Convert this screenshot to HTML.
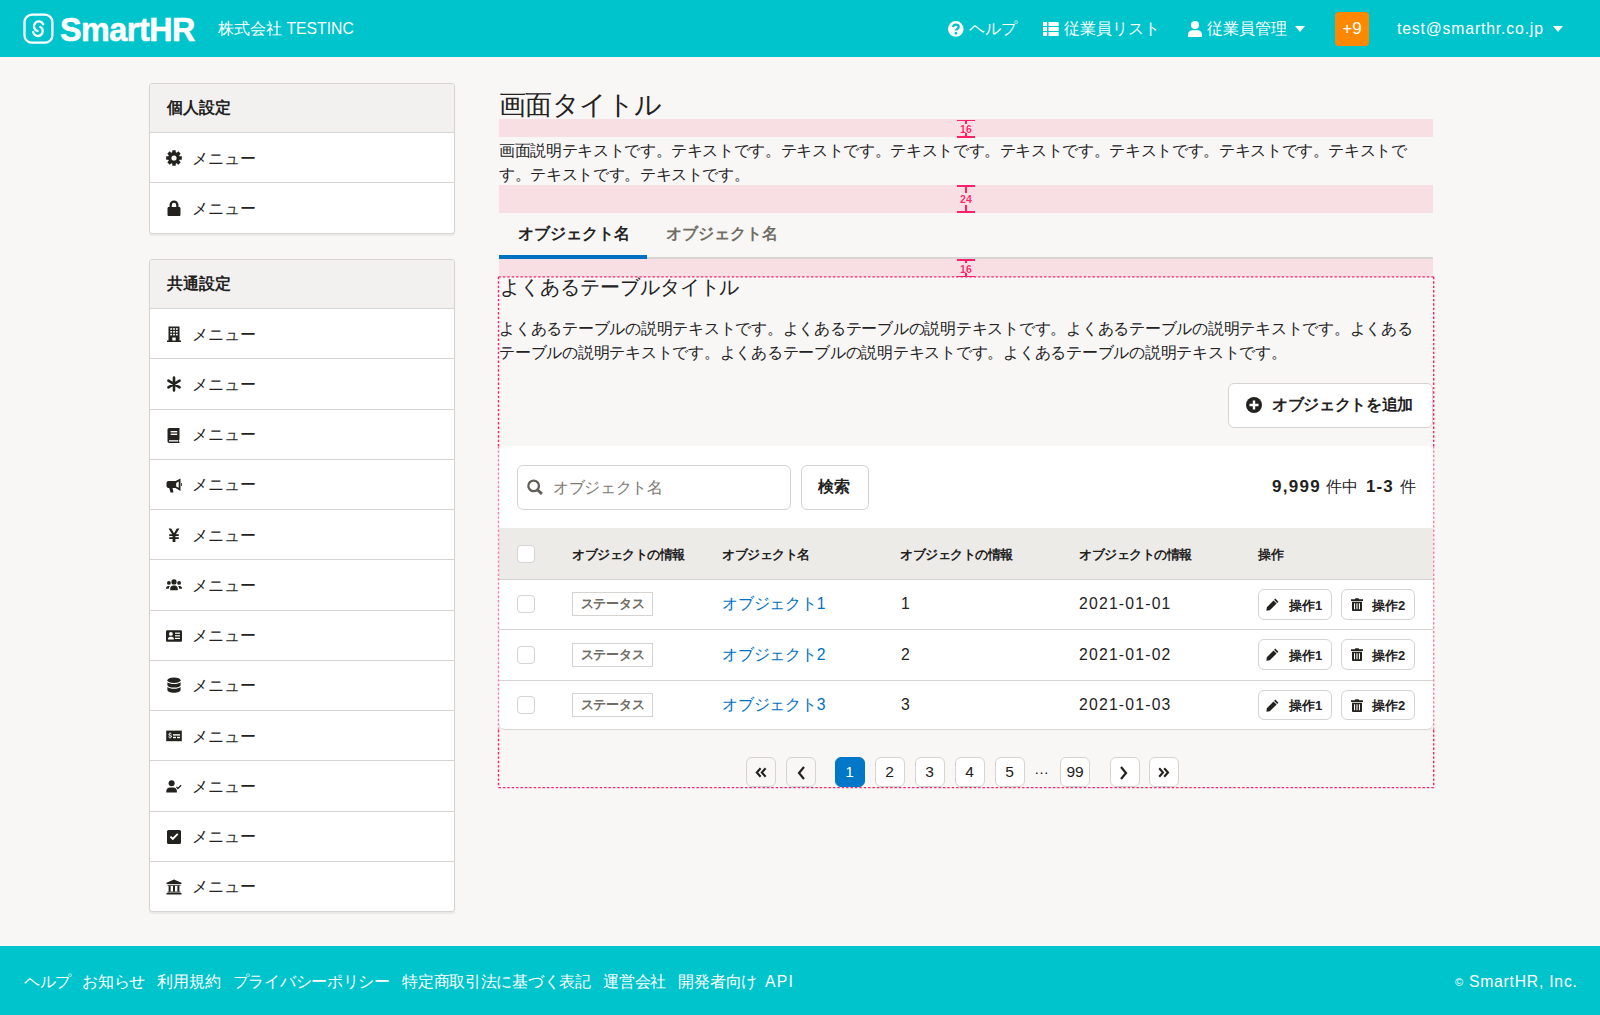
<!DOCTYPE html>
<html lang="ja">
<head>
<meta charset="utf-8">
<style>
*{box-sizing:border-box;margin:0;padding:0}
html,body{width:1600px;height:1015px;overflow:hidden}
body{font-family:"Liberation Sans",sans-serif;background:#f8f7f6;color:#23221e;position:relative;font-size:15.75px}
.abs{position:absolute}
.t{position:absolute;white-space:nowrap;line-height:1}
svg{display:block}
/* header */
#hdr{position:absolute;left:0;top:0;width:1600px;height:57px;background:#00c4cc;color:#fff}
#ftr{position:absolute;left:0;top:946px;width:1600px;height:69px;background:#00c4cc;color:#fff}
/* panels */
.panel{position:absolute;left:149px;width:306px;background:#fff;border:1px solid #d6d3d0;border-radius:3px;box-shadow:0 2px 1.5px rgba(0,0,0,.06);overflow:hidden}
.phead{height:49px;background:#f2f1f0;border-bottom:1px solid #d6d3d0;font-weight:bold;padding-left:16.7px;line-height:48px}
.prow{height:50.25px;border-top:1px solid #d6d3d0;position:relative}
.phead + .prow{border-top:none;height:49.25px}
.prow .ic{position:absolute;left:16px;top:17px}
.prow .tx{position:absolute;left:42px;top:0.5px;line-height:50px}
.pink{position:absolute;left:499px;width:934px;background:#f8dfe4}
.mk{position:absolute;left:957px;width:18px}
.mk .h{position:absolute;left:0;width:18px;height:1.5px;background:#ff1f6b}
.mk .v{position:absolute;left:8.25px;width:1.5px;background:#ff1f6b}
.mk .n{position:absolute;left:-6px;width:30px;text-align:center;font-size:10.5px;font-weight:bold;color:#ff1f6b;line-height:10px;letter-spacing:0.2px;text-shadow:0 0 1px #fff,0 0 1px #fff}
.btn{position:absolute;background:#fff;border:1px solid #d6d3d0;border-radius:6px}
.pg{position:absolute;top:757px;width:30px;height:30px;background:#fff;border:1px solid #d6d3d0;border-radius:6px;font-size:15.5px;text-align:center;line-height:27px}
.cb{position:absolute;left:517px;width:18px;height:18px;background:#fff;border:1px solid #d6d3d0;border-radius:4px}
.tag{position:absolute;left:572px;width:81px;height:24px;border:1px solid #d6d3d0;background:#fff;font-size:12.5px;font-weight:bold;color:#706d65;text-align:center;line-height:23px;letter-spacing:-0.3px}
.th{position:absolute;top:547px;font-size:12.5px;font-weight:bold;line-height:16px;white-space:nowrap;letter-spacing:-0.5px}
.sb{position:absolute;width:74px;height:30.5px;margin-top:-0.5px;background:#fff;border:1px solid #d6d3d0;border-radius:6px}
</style>
</head>
<body>
<!-- HEADER -->
<div id="hdr">
  <svg class="abs" style="left:23px;top:13px" width="32" height="32" viewBox="0 0 32 32"><rect x="1.5" y="1.7" width="27.9" height="28" rx="7.5" fill="none" stroke="#fff" stroke-width="2.3"/><path d="M20.2 11.2A4.87 4.87 0 1 0 14.6 18M17.2 13.85A4.87 4.87 0 1 1 10.1 19.1" fill="none" stroke="#fff" stroke-width="2.3" stroke-linecap="round"/></svg>
  <div class="t" style="left:59.5px;top:11.5px;font-size:34px;font-weight:bold;transform:scaleX(.95);transform-origin:0 0;letter-spacing:-0.5px;line-height:35px;-webkit-text-stroke:0.6px #fff">SmartHR</div>
  <div class="t" style="left:218px;top:20px;line-height:18px">株式会社 TESTINC</div>

  <svg class="abs" style="left:947.8px;top:20.7px" width="16" height="16" viewBox="0 0 16 16"><circle cx="7.8" cy="7.9" r="7.8" fill="#fff"/><path d="M5.2 6.1C5.2 4.4 6.4 3.7 7.9 3.7C9.6 3.7 10.7 4.6 10.7 5.9C10.7 7.7 8 7.9 8 9.6" fill="none" stroke="#00c4cc" stroke-width="2.3"/><rect x="6.6" y="11.1" width="2.6" height="2.3" rx="0.6" fill="#00c4cc"/></svg>
  <div class="t" style="left:969px;top:20px;line-height:18px">ヘルプ</div>
  <svg class="abs" style="left:1042.6px;top:22px" width="16" height="14" viewBox="0 0 16 14"><g fill="#fff"><rect x="0" y="0" width="4.1" height="4"/><rect x="5.5" y="0" width="10.2" height="4"/><rect x="0" y="5" width="4.1" height="4"/><rect x="5.5" y="5" width="10.2" height="4"/><rect x="0" y="10" width="4.1" height="4"/><rect x="5.5" y="10" width="10.2" height="4"/></g></svg>
  <div class="t" style="left:1064px;top:20px;line-height:18px">従業員リスト</div>
  <svg class="abs" style="left:1188px;top:21px" width="14" height="16" viewBox="0 0 14 16"><circle cx="7" cy="4" r="4" fill="#fff"/><path d="M0 16 L0 13.5 C0 11 2 9.2 4.5 9.2 L9.5 9.2 C12 9.2 14 11 14 13.5 L14 16 Z" fill="#fff"/></svg>
  <div class="t" style="left:1207px;top:20px;line-height:18px">従業員管理</div>
  <svg class="abs" style="left:1295px;top:26px" width="10" height="6" viewBox="0 0 10 6"><path d="M0 0 L10 0 L5 6 Z" fill="#fff"/></svg>
  <div class="abs" style="left:1335px;top:11.5px;width:34px;height:34px;background:#ff8800;border-radius:4px"></div>
  <div class="t" style="left:1335px;top:20px;width:34px;text-align:center;font-size:17px;line-height:18px">+9</div>
  <div class="t" style="left:1397px;top:20px;line-height:18px;letter-spacing:0.85px">test@smarthr.co.jp</div>
  <svg class="abs" style="left:1553px;top:26px" width="10" height="6" viewBox="0 0 10 6"><path d="M0 0 L10 0 L5 6 Z" fill="#fff"/></svg>
</div>

<!-- SIDEBAR -->
<div class="panel" style="top:83px;height:150.5px">
  <div class="phead">個人設定</div>
  <div class="prow"><svg class="ic" width="16" height="16" viewBox="0 0 16 16"><path fill="#23221e" fill-rule="evenodd" d="M6.26 2.36 L6.33 0.18 L9.67 0.18 L9.74 2.36 L10.75 2.78 L12.35 1.29 L14.71 3.65 L13.22 5.25 L13.64 6.26 L15.82 6.33 L15.82 9.67 L13.64 9.74 L13.22 10.75 L14.71 12.35 L12.35 14.71 L10.75 13.22 L9.74 13.64 L9.67 15.82 L6.33 15.82 L6.26 13.64 L5.25 13.22 L3.65 14.71 L1.29 12.35 L2.78 10.75 L2.36 9.74 L0.18 9.67 L0.18 6.33 L2.36 6.26 L2.78 5.25 L1.29 3.65 L3.65 1.29 L5.25 2.78Z M8 5.4A2.6 2.6 0 1 0 8 10.6A2.6 2.6 0 1 0 8 5.4Z"/></svg><span class="tx">メニュー</span></div>
  <div class="prow"><svg class="ic" width="16" height="16" viewBox="0 0 16 16"><path fill="#23221e" d="M3.5 7V5a4.5 4.5 0 0 1 9 0v2h0.7c0.7 0 1.3 0.6 1.3 1.3v6.4c0 0.7-0.6 1.3-1.3 1.3H2.8c-0.7 0-1.3-0.6-1.3-1.3V8.3C1.5 7.6 2.1 7 2.8 7z M5.8 7h4.4V5a2.2 2.2 0 0 0-4.4 0z"/></svg><span class="tx">メニュー</span></div>
</div>

<div class="panel" style="top:259px;height:653px">
  <div class="phead">共通設定</div>
  <div class="prow"><svg class="ic" width="16" height="16" viewBox="0 0 16 16"><path fill="#23221e" d="M2.5 0.5h11v14h1.5V16H1v-1.5h1.5z"/><g fill="#fff"><rect x="4.3" y="2.2" width="1.8" height="1.6"/><rect x="7.1" y="2.2" width="1.8" height="1.6"/><rect x="9.9" y="2.2" width="1.8" height="1.6"/><rect x="4.3" y="5" width="1.8" height="1.6"/><rect x="7.1" y="5" width="1.8" height="1.6"/><rect x="9.9" y="5" width="1.8" height="1.6"/><rect x="4.3" y="7.8" width="1.8" height="1.6"/><rect x="7.1" y="7.8" width="1.8" height="1.6"/><rect x="9.9" y="7.8" width="1.8" height="1.6"/><rect x="6.3" y="11.5" width="3.4" height="3"/></g></svg><span class="tx">メニュー</span></div>
  <div class="prow"><svg class="ic" width="16" height="16" viewBox="0 0 16 16"><g stroke="#23221e" stroke-width="2.6" stroke-linecap="round"><path d="M8 1.5v13M2.4 4.7l11.2 6.6M2.4 11.3l11.2-6.6"/></g></svg><span class="tx">メニュー</span></div>
  <div class="prow"><svg class="ic" width="16" height="16" viewBox="0 0 16 16"><path fill="#23221e" d="M3.2 1h10.3v11.5c-0.6 0.2-0.8 0.7-0.8 1.2s0.2 1 0.8 1.2V16H3.2C2.3 16 1.5 15.2 1.5 14.3V2.7C1.5 1.8 2.3 1 3.2 1z"/><g fill="#fff"><rect x="4.6" y="4" width="6.6" height="1.4"/><rect x="4.6" y="6.6" width="6.6" height="1.4"/><rect x="3" y="13.2" width="9" height="1.3"/></g></svg><span class="tx">メニュー</span></div>
  <div class="prow"><svg class="ic" width="16" height="16" viewBox="0 0 16 16"><path fill="#23221e" d="M14.5 1.5v12.5l-5-3H6.5l1 4.5H4.5L3.2 11H2.5C1.4 11 0.5 10 0.5 9V6c0-1.1 0.9-2 2-2h7z"/><path fill="#23221e" d="M15 6h0.8v3H15z"/><path fill="#fff" d="M12.7 4.6L10.2 6v3.4l2.5 1.4z"/></svg><span class="tx">メニュー</span></div>
  <div class="prow"><svg class="ic" width="16" height="16" viewBox="0 0 16 16"><path fill="#23221e" d="M2.6 1.5h2.6L8 6.3l2.8-4.8h2.6L9.9 7.3h2.9v1.6H9.4v1.4h3.4v1.6H9.4v3.1H6.6v-3.1H3.2v-1.6h3.4V8.9H3.2V7.3h2.9z"/></svg><span class="tx">メニュー</span></div>
  <div class="prow"><svg class="ic" width="16" height="16" viewBox="0 0 16 16"><g fill="#23221e"><circle cx="8" cy="4.9" r="2.6"/><circle cx="2.9" cy="5.9" r="1.9"/><circle cx="13.1" cy="5.9" r="1.9"/><path d="M4.2 13.2v-1.5c0-1.8 1.4-3.2 3.2-3.2h1.2c1.8 0 3.2 1.4 3.2 3.2v1.5z"/><path d="M0 11.4c0-1.3 0.9-2.4 2.2-2.4h1.7c-0.7 0.7-1.1 1.6-1.1 2.6v0.2H0z"/><path d="M16 11.4c0-1.3-0.9-2.4-2.2-2.4h-1.7c0.7 0.7 1.1 1.6 1.1 2.6v0.2H16z"/></g></svg><span class="tx">メニュー</span></div>
  <div class="prow"><svg class="ic" width="16" height="16" viewBox="0 0 16 16"><path fill="#23221e" d="M1.3 2.2h13.4c0.7 0 1.3 0.6 1.3 1.3v9c0 0.7-0.6 1.3-1.3 1.3H1.3C0.6 13.8 0 13.2 0 12.5v-9c0-0.7 0.6-1.3 1.3-1.3z"/><g fill="#fff"><circle cx="4.9" cy="5.9" r="1.9"/><path d="M1.9 11.6v-0.6c0-1.3 1-2.3 2.3-2.3h1.4c1.3 0 2.3 1 2.3 2.3v0.6z"/><rect x="9" y="4.6" width="5" height="1.2"/><rect x="9" y="7.2" width="5" height="1.2"/><rect x="9" y="9.8" width="5" height="1.2"/></g></svg><span class="tx">メニュー</span></div>
  <div class="prow"><svg class="ic" width="16" height="16" viewBox="0 0 16 16" style="top:16px"><g fill="#23221e"><ellipse cx="8" cy="3.3" rx="6.6" ry="2.8"/><path d="M1.4 5.2v2.7c0 1.5 3 2.7 6.6 2.7s6.6-1.2 6.6-2.7V5.2c-1.3 1.1-3.8 1.8-6.6 1.8S2.7 6.3 1.4 5.2z"/><path d="M1.4 10v3c0 1.5 3 2.8 6.6 2.8s6.6-1.3 6.6-2.8v-3c-1.3 1.1-3.8 1.8-6.6 1.8S2.7 11.1 1.4 10z"/></g></svg><span class="tx">メニュー</span></div>
  <div class="prow"><svg class="ic" width="16" height="16" viewBox="0 0 16 16"><path fill="#23221e" d="M0.2 2.6h15.6v10.6H0.2z"/><g fill="#fff"><path d="M3.6 4.6h0.9v0.8c0.8 0.1 1.2 0.5 1.3 1.1H4.8c-0.1-0.3-0.3-0.4-0.7-0.4-0.4 0-0.6 0.2-0.6 0.4 0 0.8 2.4 0.3 2.4 1.9 0 0.7-0.5 1.1-1.4 1.2v0.9H3.6v-0.9c-0.8-0.1-1.3-0.6-1.3-1.2h1c0.1 0.3 0.4 0.5 0.8 0.5 0.4 0 0.7-0.2 0.7-0.5 0-0.8-2.4-0.4-2.4-1.9 0-0.6 0.5-1.1 1.2-1.1z"/><rect x="7" y="6.2" width="7" height="1.4"/><rect x="7" y="8.8" width="3" height="1.4"/><rect x="11" y="8.8" width="3" height="1.4"/></g></svg><span class="tx">メニュー</span></div>
  <div class="prow"><svg class="ic" width="16" height="16" viewBox="0 0 16 16"><g fill="#23221e"><circle cx="5.6" cy="5.2" r="3"/><path d="M0.3 14.5v-1.4c0-2 1.6-3.6 3.6-3.6h3.4c2 0 3.6 1.6 3.6 3.6v1.4z"/><path d="M10.9 8.6l1 1 2.8-2.8 0.9 0.9-3.7 3.7-1.9-1.9z"/></g></svg><span class="tx">メニュー</span></div>
  <div class="prow"><svg class="ic" width="16" height="16" viewBox="0 0 16 16"><rect x="1" y="1" width="14" height="14" rx="1.6" fill="#23221e"/><path d="M3.8 8.2l3 3 5.6-5.6-1.3-1.3-4.3 4.3-1.7-1.7z" fill="#fff"/></svg><span class="tx">メニュー</span></div>
  <div class="prow"><svg class="ic" width="16" height="16" viewBox="0 0 16 16"><g fill="#23221e"><path d="M8 0.5l7.5 3.2v1.4H0.5V3.7z"/><rect x="1.5" y="5.8" width="13" height="0.9"/><rect x="2.6" y="6.7" width="2" height="6"/><rect x="7" y="6.7" width="2" height="6"/><rect x="11.4" y="6.7" width="2" height="6"/><rect x="1.5" y="12.6" width="13" height="1"/><rect x="0.5" y="14" width="15" height="1.5"/></g></svg><span class="tx">メニュー</span></div>
</div>

<!-- MAIN -->
<div class="t" style="left:499px;top:90px;font-size:27px;line-height:30px;letter-spacing:-0.55px">画面タイトル</div>
<div class="pink" style="top:119px;height:18px"></div>
<div class="mk" style="top:119.5px;height:18px"><div class="h" style="top:0"></div><div class="v" style="top:0;height:4px"></div><div class="n" style="top:4.5px">16</div><div class="v" style="top:13.5px;height:3.5px"></div><div class="h" style="top:16.5px"></div></div>

<div class="t" style="left:499px;top:139px;line-height:24px;letter-spacing:-0.35px">画面説明テキストです。テキストです。テキストです。テキストです。テキストです。テキストです。テキストです。テキストで<br>す。テキストです。テキストです。</div>

<div class="pink" style="top:185px;height:27.5px"></div>
<div class="mk" style="top:185px;height:27.5px"><div class="h" style="top:0"></div><div class="v" style="top:0;height:8px"></div><div class="n" style="top:9px">24</div><div class="v" style="top:19.5px;height:8px"></div><div class="h" style="top:26px"></div></div>

<!-- tabs -->
<div class="abs" style="left:499px;top:257.25px;width:934px;height:1.5px;background:#d9d6d2"></div>
<div class="t" style="left:518px;top:225px;font-weight:bold;line-height:18px">オブジェクト名</div>
<div class="t" style="left:666px;top:225px;font-weight:bold;line-height:18px;color:#706d65">オブジェクト名</div>
<div class="abs" style="left:499px;top:255px;width:148.2px;height:3.75px;background:#0071c1"></div>

<div class="pink" style="top:258.75px;height:17.75px"></div>
<div class="mk" style="top:259px;height:18px"><div class="h" style="top:0"></div><div class="v" style="top:0;height:4px"></div><div class="n" style="top:4.5px">16</div><div class="v" style="top:13.5px;height:3.5px"></div><div class="h" style="top:16.5px"></div></div>

<!-- section -->
<div class="t" style="left:500px;top:276px;font-size:20.25px;line-height:22px;letter-spacing:-0.05px">よくあるテーブルタイトル</div>
<div class="t" style="left:499px;top:316.5px;line-height:24px;letter-spacing:-0.25px">よくあるテーブルの説明テキストです。よくあるテーブルの説明テキストです。よくあるテーブルの説明テキストです。よくある<br>テーブルの説明テキストです。よくあるテーブルの説明テキストです。よくあるテーブルの説明テキストです。</div>

<div class="btn" style="left:1228px;top:382.5px;width:205px;height:45px"></div>
<svg class="abs" style="left:1246px;top:397px" width="16" height="16" viewBox="0 0 16 16"><circle cx="8" cy="8" r="8" fill="#23221e"/><path d="M6.8 3.5h2.4v3.3h3.3v2.4H9.2v3.3H6.8V9.2H3.5V6.8h3.3z" fill="#fff"/></svg>
<div class="t" style="left:1272px;top:396px;font-weight:bold;line-height:18px;letter-spacing:-0.35px">オブジェクトを追加</div>

<!-- table card -->
<div class="abs" style="left:498.5px;top:445.5px;width:934.5px;height:283.8px;background:#fff;border-radius:6px;box-shadow:0 1px 1px rgba(0,0,0,.14)"></div>
<div class="abs" style="left:517px;top:464.5px;width:274px;height:45px;background:#fff;border:1px solid #d6d3d0;border-radius:6px"></div>
<svg class="abs" style="left:527px;top:478.5px" width="17" height="17" viewBox="0 0 17 17"><circle cx="6.65" cy="6.9" r="5.3" fill="none" stroke="#625f58" stroke-width="2.3"/><path d="M10.6 11l4.3 3.8" stroke="#625f58" stroke-width="3" stroke-linecap="butt"/></svg>
<div class="t" style="left:553px;top:479px;line-height:18px;color:#7d7a73;letter-spacing:-0.35px">オブジェクト名</div>
<div class="btn" style="left:800.5px;top:464.5px;width:68px;height:45px"></div>
<div class="t" style="left:818px;top:478px;font-weight:bold;line-height:18px">検索</div>
<div class="t" style="left:1272px;top:478px;line-height:18px"><span style="font-size:17px;font-weight:bold;letter-spacing:1.3px">9,999</span><span style="margin-left:5px">件中</span><span style="margin-left:8px;font-size:17px;font-weight:bold;letter-spacing:1px">1-3</span><span style="margin-left:6px">件</span></div>

<div class="abs" style="left:498.5px;top:528.3px;width:934.5px;height:51.5px;background:#edebe8;border-bottom:1px solid #d6d3d0"></div>
<div class="cb" style="top:544.5px"></div>
<div class="th" style="left:572px">オブジェクトの情報</div>
<div class="th" style="left:722px">オブジェクト名</div>
<div class="th" style="left:900px">オブジェクトの情報</div>
<div class="th" style="left:1079px">オブジェクトの情報</div>
<div class="th" style="left:1258px">操作</div>

<div class="abs" style="left:498.5px;top:629px;width:934.5px;height:1px;background:#d6d3d0"></div>
<div class="abs" style="left:498.5px;top:679.5px;width:934.5px;height:1px;background:#d6d3d0"></div>

<!-- rows -->
<div class="cb" style="top:595px"></div>
<div class="tag" style="top:592px">ステータス</div>
<div class="t" style="left:722px;top:595px;line-height:18px;color:#0071c1;letter-spacing:-0.2px">オブジェクト1</div>
<div class="t" style="left:901px;top:595px;line-height:18px">1</div>
<div class="t" style="left:1079px;top:595px;line-height:18px;letter-spacing:1.2px">2021-01-01</div>

<div class="cb" style="top:645.5px"></div>
<div class="tag" style="top:642.5px">ステータス</div>
<div class="t" style="left:722px;top:645.5px;line-height:18px;color:#0071c1;letter-spacing:-0.2px">オブジェクト2</div>
<div class="t" style="left:901px;top:645.5px;line-height:18px">2</div>
<div class="t" style="left:1079px;top:645.5px;line-height:18px;letter-spacing:1.2px">2021-01-02</div>

<div class="cb" style="top:696px"></div>
<div class="tag" style="top:693px">ステータス</div>
<div class="t" style="left:722px;top:696px;line-height:18px;color:#0071c1;letter-spacing:-0.2px">オブジェクト3</div>
<div class="t" style="left:901px;top:696px;line-height:18px">3</div>
<div class="t" style="left:1079px;top:696px;line-height:18px;letter-spacing:1.2px">2021-01-03</div>

<!-- op buttons -->
<div class="sb" style="left:1257.5px;top:589.5px"></div>
<svg class="abs" style="left:1266px;top:598.0px" width="13" height="13" viewBox="0 0 13 13"><path d="M9.3 0.6l3.1 3.1-1.2 1.2-3.1-3.1z M7.5 2.4l3.1 3.1-6.8 6.8-3.4 0.5 0.4-3.5z" fill="#23221e"/></svg>
<div class="t" style="left:1289px;top:598.5px;font-size:13px;font-weight:bold;line-height:13px">操作1</div>
<div class="sb" style="left:1341px;top:589.5px"></div>
<svg class="abs" style="left:1351px;top:598.0px" width="12" height="13" viewBox="0 0 12 13"><path d="M0 1.3h3.8l0.5-1h3.4l0.5 1H12v1.8H0z M1 3.8h10v8.4c0 0.5-0.4 0.8-0.8 0.8H1.8c-0.4 0-0.8-0.3-0.8-0.8z" fill="#23221e"/><path d="M3 5.3h1.1v6H3z M5.45 5.3h1.1v6H5.45z M7.9 5.3h1.1v6H7.9z" fill="#fff"/></svg>
<div class="t" style="left:1372px;top:598.5px;font-size:13px;font-weight:bold;line-height:13px">操作2</div>
<div class="sb" style="left:1257.5px;top:639.75px"></div>
<svg class="abs" style="left:1266px;top:648.25px" width="13" height="13" viewBox="0 0 13 13"><path d="M9.3 0.6l3.1 3.1-1.2 1.2-3.1-3.1z M7.5 2.4l3.1 3.1-6.8 6.8-3.4 0.5 0.4-3.5z" fill="#23221e"/></svg>
<div class="t" style="left:1289px;top:648.75px;font-size:13px;font-weight:bold;line-height:13px">操作1</div>
<div class="sb" style="left:1341px;top:639.75px"></div>
<svg class="abs" style="left:1351px;top:648.25px" width="12" height="13" viewBox="0 0 12 13"><path d="M0 1.3h3.8l0.5-1h3.4l0.5 1H12v1.8H0z M1 3.8h10v8.4c0 0.5-0.4 0.8-0.8 0.8H1.8c-0.4 0-0.8-0.3-0.8-0.8z" fill="#23221e"/><path d="M3 5.3h1.1v6H3z M5.45 5.3h1.1v6H5.45z M7.9 5.3h1.1v6H7.9z" fill="#fff"/></svg>
<div class="t" style="left:1372px;top:648.75px;font-size:13px;font-weight:bold;line-height:13px">操作2</div>
<div class="sb" style="left:1257.5px;top:690px"></div>
<svg class="abs" style="left:1266px;top:698.5px" width="13" height="13" viewBox="0 0 13 13"><path d="M9.3 0.6l3.1 3.1-1.2 1.2-3.1-3.1z M7.5 2.4l3.1 3.1-6.8 6.8-3.4 0.5 0.4-3.5z" fill="#23221e"/></svg>
<div class="t" style="left:1289px;top:699px;font-size:13px;font-weight:bold;line-height:13px">操作1</div>
<div class="sb" style="left:1341px;top:690px"></div>
<svg class="abs" style="left:1351px;top:698.5px" width="12" height="13" viewBox="0 0 12 13"><path d="M0 1.3h3.8l0.5-1h3.4l0.5 1H12v1.8H0z M1 3.8h10v8.4c0 0.5-0.4 0.8-0.8 0.8H1.8c-0.4 0-0.8-0.3-0.8-0.8z" fill="#23221e"/><path d="M3 5.3h1.1v6H3z M5.45 5.3h1.1v6H5.45z M7.9 5.3h1.1v6H7.9z" fill="#fff"/></svg>
<div class="t" style="left:1372px;top:699px;font-size:13px;font-weight:bold;line-height:13px">操作2</div>


<!-- pagination -->
<div class="pg" style="left:745.5px;background:#f8f7f6"><svg style="position:absolute;left:8px;top:9px" width="13" height="11" viewBox="0 0 13 11"><path d="M5.6 1.2L1.8 5.5 5.6 9.8M10.6 1.2L6.8 5.5 10.6 9.8" fill="none" stroke="#23221e" stroke-width="2.1"/></svg></div>
<div class="pg" style="left:785.5px;background:#f8f7f6"><svg style="position:absolute;left:10px;top:7.5px" width="9" height="14" viewBox="0 0 9 14"><path d="M7 1L2 7 7 13" fill="none" stroke="#23221e" stroke-width="2.2"/></svg></div>
<div class="pg" style="left:834.5px;background:#0077c7;border-color:#0077c7;color:#fff">1</div>
<div class="pg" style="left:874.5px">2</div>
<div class="pg" style="left:914.5px">3</div>
<div class="pg" style="left:954.5px">4</div>
<div class="pg" style="left:994.5px">5</div>
<div class="t" style="left:1034px;top:761px;font-size:15px;line-height:15px">…</div>
<div class="pg" style="left:1060px">99</div>
<div class="pg" style="left:1109.5px"><svg style="position:absolute;left:8.5px;top:7.5px" width="9" height="14" viewBox="0 0 9 14"><path d="M2 1L7 7 2 13" fill="none" stroke="#23221e" stroke-width="2.2"/></svg></div>
<div class="pg" style="left:1149px"><svg style="position:absolute;left:6.5px;top:9px" width="13" height="11" viewBox="0 0 13 11"><path d="M2.2 1.2L6 5.5 2.2 9.8M7.2 1.2L11 5.5 7.2 9.8" fill="none" stroke="#23221e" stroke-width="2.1"/></svg></div>

<!-- dashed annotation box -->
<svg class="abs" style="left:0;top:0" width="1600" height="1015" viewBox="0 0 1600 1015"><g fill="none" stroke="#ff1f6b" stroke-width="1.4" stroke-dasharray="2.4 2">
<line x1="498.5" y1="276.9" x2="1433.7" y2="276.9"/>
<line x1="498.5" y1="787.6" x2="1433.7" y2="787.6"/>
<line x1="498.5" y1="276.9" x2="498.5" y2="446"/>
<line x1="1433.7" y1="276.9" x2="1433.7" y2="446"/>
<line x1="498.5" y1="730" x2="498.5" y2="787.6"/>
<line x1="1433.7" y1="730" x2="1433.7" y2="787.6"/>
<line x1="498.5" y1="446" x2="498.5" y2="730" stroke-opacity="0.55"/>
<line x1="1433.7" y1="446" x2="1433.7" y2="730" stroke-opacity="0.55"/>
</g></svg>

<!-- FOOTER -->
<div id="ftr">
  <div class="t" style="left:24px;top:27px;line-height:18px;letter-spacing:-0.3px">ヘルプ<span style="margin-left:11px">お知らせ</span><span style="margin-left:12.5px">利用規約</span><span style="margin-left:12.5px">プライバシーポリシー</span><span style="margin-left:12.5px">特定商取引法に基づく表記</span><span style="margin-left:12.5px">運営会社</span><span style="margin-left:12.5px">開発者向け<span style="margin-left:8px;letter-spacing:1.2px">API</span></span></div>
  <div class="t" style="left:1455px;top:27px;line-height:18px;letter-spacing:0.75px"><span style="font-size:11px;position:relative;top:-1.5px">©</span> SmartHR, Inc.</div>
</div>
</body>
</html>
